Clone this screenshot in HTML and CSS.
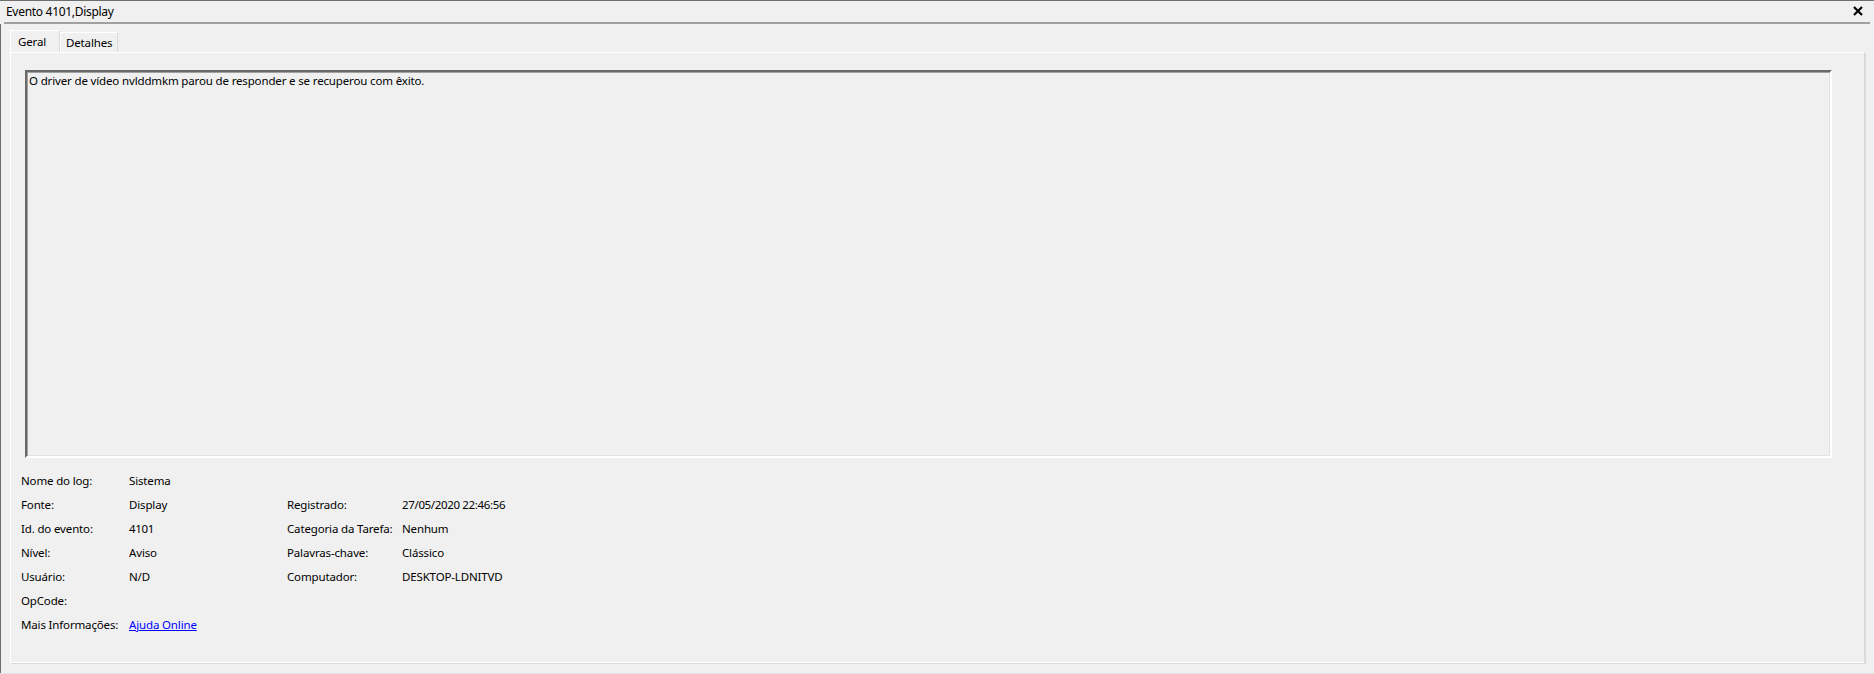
FILE: index.html
```html
<!DOCTYPE html>
<html lang="pt-BR">
<head>
<meta charset="utf-8">
<title>Evento 4101,Display</title>
<link rel="stylesheet" href="styles.css">
</head>
<body>
<div class="window">
  <div class="titlebar">
    <span class="title">Evento 4101,Display</span>
    <span class="close" aria-label="Fechar">
      <svg width="10" height="10" viewBox="0 0 10 10"><path d="M1 1 L9 9 M9 1 L1 9" stroke="#000" stroke-width="2.2" fill="none"/></svg>
    </span>
  </div>
  <div class="sep"></div>
  <div class="content">
    <div class="tabs">
      <div class="tab active">Geral</div>
      <div class="tab">Detalhes</div>
    </div>
    <div class="panel">
      <div class="textbox">O driver de vídeo nvlddmkm parou de responder e se recuperou com êxito.</div>
      <div class="props">
        <div class="row"><span class="k">Nome do log:</span><span class="v">Sistema</span></div>
        <div class="row"><span class="k">Fonte:</span><span class="v">Display</span><span class="k2">Registrado:</span><span class="v2 num">27/05/2020 22:46:56</span></div>
        <div class="row"><span class="k">Id. do evento:</span><span class="v num">4101</span><span class="k2">Categoria da Tarefa:</span><span class="v2">Nenhum</span></div>
        <div class="row"><span class="k">Nível:</span><span class="v">Aviso</span><span class="k2">Palavras-chave:</span><span class="v2">Clássico</span></div>
        <div class="row"><span class="k">Usuário:</span><span class="v">N/D</span><span class="k2">Computador:</span><span class="v2">DESKTOP-LDNITVD</span></div>
        <div class="row"><span class="k">OpCode:</span><span class="v"></span></div>
        <div class="row"><span class="k">Mais Informações:</span><a class="v link" href="#">Ajuda Online</a></div>
      </div>
    </div>
  </div>
</div>
</body>
</html>
```
FILE: styles.css
```css
html, body {
  margin: 0;
  padding: 0;
  background: #f0f0f0;
}
body {
  font-family: "Noto Sans", "Open Sans", sans-serif;
  font-size: 11.5px;
  letter-spacing: -0.15px;
  color: #000;
  width: 1874px;
  height: 674px;
  overflow: hidden;
}
.window {
  border-top: 1px solid #6e6e6e;
  height: 672px;
  border-bottom: 1px solid #e3e3e3;
  display: flex;
  flex-direction: column;
}
.titlebar {
  height: 21px;
  display: flex;
  justify-content: space-between;
  align-items: center;
  padding: 0 11px 0 6px;
}
.title {
  line-height: 21px;
  font-size: 12px;
  letter-spacing: -0.3px;
}
.close {
  display: flex;
  align-items: center;
  margin-top: -1px;
}
.sep {
  margin: 0 4px;
  height: 2px;
  background: #a0a0a0;
}
.content {
  flex: 1;
  border-left: 1px solid #6e6e6e;
  padding: 6px 9px 10px 9px;
  display: flex;
  flex-direction: column;
}
.tabs {
  display: flex;
  align-items: flex-end;
  height: 22px;
}
.tab {
  height: 20px;
  padding: 0 5px;
  line-height: 20px;
  border: 1px solid #d9d9d9;
  border-left-color: #fff;
  border-top-color: #fff;
  border-bottom: none;
  box-sizing: border-box;
  white-space: nowrap;
}
.tab.active {
  height: 22px;
  width: 50px;
  padding: 0 7px;
  line-height: 22px;
  border-right: 1px solid #d9d9d9;
}
.panel {
  flex: 1;
  border: 1px solid #fff;
  border-right-color: #dadada;
  box-shadow: 1px 1px 0 #dadada;
  padding: 17px 32px 0 14px;
  display: flex;
  flex-direction: column;
}
.textbox {
  height: 382px;
  border-top: 2px solid #696969;
  border-left: 2px solid #696969;
  border-right: 2px solid #fff;
  border-bottom: 2px solid #fff;
  box-shadow: inset 1px 1px 0 #a0a0a0, inset -1px -1px 0 #e3e3e3;
  padding: 0 2px 2px;
  line-height: 18px;
}
.props {
  padding-top: 11px;
  margin-left: -4px;
}
.row {
  display: flex;
  height: 23.9px;
  align-items: center;
  white-space: nowrap;
}
.row span, .row a {
  flex-shrink: 0;
}
.k { width: 108px; }
.v { width: 158px; }
.k2 { width: 115px; }
.num { letter-spacing: -0.35px; }
.link {
  color: #0000ff;
  text-decoration: underline;
  width: auto;
}
```
